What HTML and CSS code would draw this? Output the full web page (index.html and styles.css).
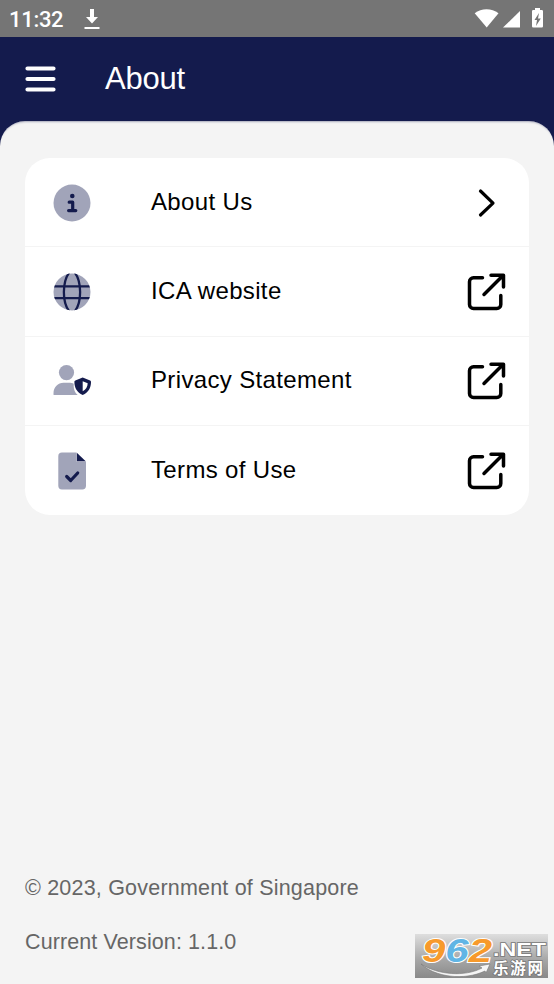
FILE: index.html
```html
<!DOCTYPE html>
<html lang="en">
<head>
<meta charset="utf-8">
<title>About</title>
<link rel="stylesheet" href="styles.css">
</head>
<body>
<svg width="0" height="0" class="defs">
  <symbol id="external" viewBox="0 0 40 40">
    <g fill="none" stroke="#000" stroke-width="3.500" stroke-linecap="round" stroke-linejoin="round">
      <path d="M16.500 5.700H7.500a4 4 0 0 0-4 4V32.500a4 4 0 0 0 4 4h23.300a4 4 0 0 0 4-4V23.500M18 22.500 37 3.500M25 3.200h12.500V15"/>
    </g>
  </symbol>
</svg>
<div class="screen">
  <div class="status">
    <span class="clock">11:32</span>
    <svg class="download" width="16" height="22" viewBox="0 0 16 22" fill="#fff"><path d="M6 1h4v8h4l-6 6.500L2 9h4zM.5 19h15v1.900H.5z"/></svg>
    <svg class="signals" width="72" height="22" viewBox="0 0 72 22" fill="#fff">
      <path d="M.7 5.200C7.500-.2 17.500-.2 24.500 5.200L12.700 19.500z"/>
      <path d="M29 19.500 46 3v16.500z"/>
      <path fill-rule="evenodd" d="M61 0h5v2h1.800q1.200 0 1.200 1.200v15.100q0 1.200-1.200 1.200h-8.600q-1.200 0-1.200-1.200V3.200Q58 2 59.200 2H61zM65 5l-4.500 7H63l-1 6 4.800-7.500H64z"/>
    </svg>
  </div>
  <header class="bar">
    <svg width="31" height="28" viewBox="0 0 31 28"><path d="M2.500 3.500h26M2.500 14h26M2.500 24.500h26" stroke="#fff" stroke-width="4.200" stroke-linecap="round"/></svg>
    <h1>About</h1>
  </header>
  <main class="sheet">
    <ul class="card">
      <li>
        <svg class="icon" viewBox="0 0 38 38"><circle cx="19" cy="19" r="18.500" fill="#a1a4b9"/><circle cx="19.300" cy="12" r="2.300" fill="#141b4d"/><path d="M16.200 18.200h3.500v8.200M15.600 26.600h7.200" fill="none" stroke="#141b4d" stroke-width="3.200" stroke-linecap="round" stroke-linejoin="round"/></svg>
        <span>About Us</span>
        <svg class="action" viewBox="0 0 40 40"><path d="M14.500 8 27 20.200 14.500 32" fill="none" stroke="#000" stroke-width="3.200" stroke-linecap="round" stroke-linejoin="round"/></svg>
      </li>
      <li>
        <svg class="icon" viewBox="0 0 38 38"><clipPath id="disc"><circle cx="19" cy="19" r="18.500"/></clipPath><g clip-path="url(#disc)"><path fill="#a1a4b9" d="M0 0h38v38H0z"/><path d="M0 13.300h38M0 25.200h38M16.500-1C9 9 9 29 16.500 39M21.500-1C29 9 29 29 21.500 39" fill="none" stroke="#141b4d" stroke-width="2.300"/></g></svg>
        <span>ICA website</span>
        <svg class="action"><use href="#external"/></svg>
      </li>
      <li>
        <svg class="icon" viewBox="0 0 38 38"><g fill="#a1a4b9"><circle cx="13.500" cy="10.600" r="7.600"/><path d="M.5 32.700v-1.500c0-6 4.500-10.500 10-10.500h5c2.200 0 4 .3 5.200 1v2.500c0 3.500 1.300 6.500 4 8.800H2q-1.500 0-1.500-.300z"/></g><path d="m29.700 15.500 7.400 2.900q.9.400.9 1.300c0 6.300-2.600 10.700-8.300 13.300-5.700-2.600-8.300-7-8.300-13.300q0-.9.900-1.300z" fill="#141b4d"/><path d="M29.700 19.300v10c3.300-1.700 4.800-4.200 5-8z" fill="#fff"/></svg>
        <span>Privacy Statement</span>
        <svg class="action"><use href="#external"/></svg>
      </li>
      <li>
        <svg class="icon" viewBox="0 0 38 38"><path d="M9 .5h14.500v9H33v24.300q0 3.700-3.700 3.700H9q-3.700 0-3.700-3.700V4.200Q5.300.5 9 .5z" fill="#a1a4b9"/><path d="M23.800.8 32.700 9.300h-8.900z" fill="#141b4d"/><path d="m13.700 24.500 4 4 7-7.500" fill="none" stroke="#141b4d" stroke-width="3.200" stroke-linecap="round" stroke-linejoin="round"/></svg>
        <span>Terms of Use</span>
        <svg class="action"><use href="#external"/></svg>
      </li>
    </ul>
    <footer>
      <p>© 2023, Government of Singapore</p>
      <p class="version">Current Version: 1.1.0</p>
    </footer>
  </main>
  <svg class="watermark" width="133" height="44" viewBox="0 0 133 44">
    <defs><linearGradient id="grey" x1="0" y1="0" x2="0" y2="1"><stop offset="0" stop-color="#dedede"/><stop offset=".6" stop-color="#a5a5a5"/><stop offset="1" stop-color="#898989"/></linearGradient></defs>
    <path fill="url(#grey)" d="M0 0h133v44H0z"/>
    <path d="M6 30c17 11 44 13 61 4l-3-2 11-2-4 9-1-2c-21 10-50 6-64-7z" fill="#f5f5f5" stroke="#777" stroke-width=".6"/>
    <text class="digits" x="7" y="28" textLength="70" lengthAdjust="spacingAndGlyphs"><tspan fill="#f79a2c">9</tspan><tspan fill="#60b5e5">6</tspan><tspan fill="#f79a2c">2</tspan></text>
    <text class="net" x="78" y="21.500" textLength="53" lengthAdjust="spacingAndGlyphs">.NET</text>
    <text class="hanzi" x="78" y="40" textLength="50">乐游网</text>
  </svg>
</div>
</body>
</html>
```

FILE: styles.css
```css
* { box-sizing: border-box; }
body { margin: 0; font-family: "Liberation Sans", Arial, sans-serif; }
.defs { position: absolute; }
.screen {
  position: relative;
  display: flex;
  flex-direction: column;
  height: 984px;
  overflow: hidden;
  background: #141b4d;
}
.status {
  display: flex;
  align-items: center;
  flex: 0 0 37px;
  padding: 0 9px;
  background: #757575;
}
.clock {
  width: 75px;
  padding-top: 2px;
  color: #fff;
  font: 500 22px/34px Roboto, sans-serif;
  letter-spacing: -.3px;
}
.signals { margin-left: auto; margin-right: -1px; }
.bar {
  display: flex;
  align-items: center;
  flex: 0 0 84px;
  padding-left: 25px;
}
h1 {
  margin: -1px 0 0 49px;
  color: #fff;
  font-size: 31px;
  font-weight: 400;
  line-height: 36px;
  letter-spacing: -.2px;
}
.sheet {
  display: flex;
  flex-direction: column;
  flex: 1;
  padding: 37px 25px 25px;
  background: #f4f4f4;
  border-radius: 25px 25px 0 0;
  box-shadow: inset 0 3px 2px -2px rgba(20, 27, 77, .35);
}
.card {
  margin: 0;
  padding: 0;
  list-style: none;
  background: #fff;
  border-radius: 25px;
}
.card li {
  display: flex;
  align-items: center;
  height: 89.250px;
  padding: 1px 23px 0 28px;
  border-bottom: 1px solid #f4f4f4;
  color: #000;
  font-size: 24px;
  letter-spacing: .35px;
}
.card li:last-child { border-bottom: 0; }
.card span { margin-top: -2px; }
.icon { width: 38px; height: 38px; margin-right: 60px; }
.action { width: 40px; height: 40px; margin-left: auto; }
footer { margin-top: auto; color: #666; font-size: 21.500px; letter-spacing: .2px; }
footer p { margin: 0; line-height: 34px; }
footer .version { margin-top: 20px; letter-spacing: .1px; }
.watermark { position: absolute; left: 415px; top: 934px; }
.digits {
  font: italic 700 34px "Liberation Sans", sans-serif;
  stroke: #fff;
  stroke-width: 2px;
  paint-order: stroke;
}
.net, .hanzi { fill: #fff; stroke: #777; stroke-width: 1.500px; paint-order: stroke; }
.net { font: 700 18px "Liberation Sans", sans-serif; }
.hanzi { font: 700 15.500px "Noto Sans CJK SC", sans-serif; }
```
